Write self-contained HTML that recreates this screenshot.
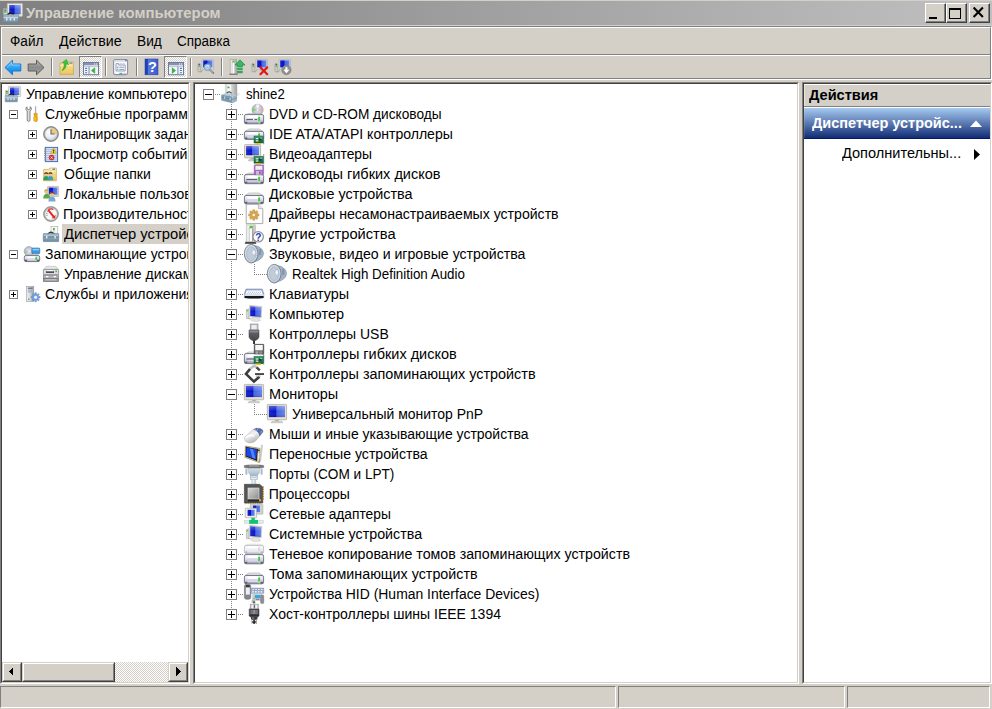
<!DOCTYPE html>
<html><head><meta charset="utf-8"><title>Управление компьютером</title>
<style>
html,body{margin:0;padding:0;}
body{width:992px;height:709px;background:#d4d0c8;position:relative;overflow:hidden;
 font-family:"Liberation Sans",sans-serif;font-size:14px;color:#000;}
div,svg{position:absolute;box-sizing:border-box;}
.t{white-space:nowrap;overflow:visible;transform-origin:0 0;}
.pane{background:#fff;overflow:hidden;}
.ic{overflow:visible;}
</style></head><body>

<svg width="0" height="0" style="position:absolute"><defs>
<linearGradient id="gScr" x1="0" y1="0" x2="1" y2="0"><stop offset="0" stop-color="#1024d0"/><stop offset="0.42" stop-color="#0810c4"/><stop offset="0.5" stop-color="#4464e4"/><stop offset="1" stop-color="#6484f0"/></linearGradient>
<linearGradient id="gScrV" x1="0" y1="0" x2="0" y2="1"><stop offset="0" stop-color="#fff" stop-opacity="0.3"/><stop offset="0.5" stop-color="#fff" stop-opacity="0.0"/><stop offset="1" stop-color="#000" stop-opacity="0.18"/></linearGradient>
<linearGradient id="gDrv" x1="0" y1="0" x2="0" y2="1"><stop offset="0" stop-color="#fbfbfe"/><stop offset="0.5" stop-color="#dcdcec"/><stop offset="0.8" stop-color="#b0b0c0"/><stop offset="1" stop-color="#9898a8"/></linearGradient>
<linearGradient id="gDrvTop" x1="0" y1="0" x2="0" y2="1"><stop offset="0" stop-color="#f4f4f4"/><stop offset="1" stop-color="#c4c4c8"/></linearGradient>
<linearGradient id="gPcb" x1="0" y1="0" x2="0" y2="1"><stop offset="0" stop-color="#3ca070"/><stop offset="1" stop-color="#14603c"/></linearGradient>
<linearGradient id="gBox" x1="0" y1="0" x2="0" y2="1"><stop offset="0" stop-color="#a8c0d0"/><stop offset="1" stop-color="#6c8aa0"/></linearGradient>
<linearGradient id="gTow" x1="0" y1="0" x2="1" y2="0"><stop offset="0" stop-color="#f0f0f0"/><stop offset="0.5" stop-color="#d8d8d8"/><stop offset="1" stop-color="#a0a0a0"/></linearGradient>
<linearGradient id="gBlueArr" x1="0" y1="0" x2="0" y2="1"><stop offset="0" stop-color="#7fd0ff"/><stop offset="0.5" stop-color="#2aa4f4"/><stop offset="1" stop-color="#0a78d8"/></linearGradient>
<linearGradient id="gGrayArr" x1="0" y1="0" x2="0" y2="1"><stop offset="0" stop-color="#b8b8b8"/><stop offset="0.5" stop-color="#8c8c8c"/><stop offset="1" stop-color="#a4a4a4"/></linearGradient>
<linearGradient id="gFold" x1="0" y1="0" x2="0" y2="1"><stop offset="0" stop-color="#fbe7a2"/><stop offset="1" stop-color="#ecc45c"/></linearGradient>
<linearGradient id="gSpk" x1="0" y1="0" x2="1" y2="1"><stop offset="0" stop-color="#d4dce6"/><stop offset="1" stop-color="#8c9cb0"/></linearGradient>
<linearGradient id="gCpu" x1="0" y1="0" x2="1" y2="1"><stop offset="0" stop-color="#d8d8d8"/><stop offset="1" stop-color="#8c8c8c"/></linearGradient>
<linearGradient id="gMouse" x1="0" y1="0" x2="0.6" y2="1"><stop offset="0" stop-color="#c8c8d0"/><stop offset="0.5" stop-color="#f2f2f2"/><stop offset="1" stop-color="#a8a8a8"/></linearGradient>
<linearGradient id="gHelp" x1="0" y1="0" x2="1" y2="0"><stop offset="0" stop-color="#1c3cb0"/><stop offset="0.22" stop-color="#2848c0"/><stop offset="0.24" stop-color="#5878dc"/><stop offset="1" stop-color="#3c5cd0"/></linearGradient>
<linearGradient id="gUsb" x1="0" y1="0" x2="0" y2="1"><stop offset="0" stop-color="#8c8c92"/><stop offset="0.3" stop-color="#5c5c62"/><stop offset="1" stop-color="#48484c"/></linearGradient>
<linearGradient id="gPort" x1="0" y1="0" x2="0" y2="1"><stop offset="0" stop-color="#e0e8f0"/><stop offset="1" stop-color="#a4b8c8"/></linearGradient>
<radialGradient id="gCd" cx="0.5" cy="0.5" r="0.5"><stop offset="0" stop-color="#fff"/><stop offset="0.25" stop-color="#e8e8f0"/><stop offset="0.6" stop-color="#d0c8e0"/><stop offset="1" stop-color="#b8b8c8"/></radialGradient>
<radialGradient id="gClock" cx="0.4" cy="0.35" r="0.7"><stop offset="0" stop-color="#fff"/><stop offset="0.7" stop-color="#e4ecf4"/><stop offset="1" stop-color="#b8c8d8"/></radialGradient>
</defs></svg>
<div style="left:0;top:1px;width:992px;height:24px;background:linear-gradient(to right,#808080,#c0c0c0);"></div>
<svg class="ic" style="left:3px;top:3px" width="20" height="20" viewBox="0 0 16 16"><rect x="3.4" y="0.3" width="12.2" height="10.4" rx="0.6" fill="#ece8dc" stroke="#b8b4a8" stroke-width="0.6"/><rect x="5" y="1.6" width="9.2" height="7.4" fill="url(#gScr)"/><rect x="5" y="1.6" width="9.2" height="7.4" fill="url(#gScrV)"/><rect x="0.4" y="4.6" width="2.8" height="5" fill="#d8d8d8" stroke="#a8a8a8" stroke-width="0.4"/><rect x="0.8" y="6.6" width="2" height="1.2" fill="#30d020"/><rect x="1" y="5.2" width="1.6" height="1" fill="#505050"/><path d="M3.6 9.6 Q6 6.4 8.6 9.6" stroke="#202020" stroke-width="1.1" fill="none"/><rect x="0.2" y="9.4" width="12.2" height="6.4" rx="0.5" fill="url(#gBox)" stroke="#6c8498" stroke-width="0.5"/><rect x="0.4" y="11.2" width="11.8" height="0.9" fill="#c4d4e0"/><rect x="2.4" y="12.2" width="1.2" height="1.8" fill="#e8eef2"/><rect x="5.4" y="12.2" width="1.2" height="1.8" fill="#e8eef2"/><rect x="8.4" y="12.2" width="1.2" height="1.8" fill="#e8eef2"/></svg>
<div class="t" style="left:26.40px;top:3px;height:20px;line-height:20px;transform:scaleX(1.0648);font-weight:bold;color:#d4d0c8;">Управление компьютером</div>
<div style="left:925px;top:3px;width:21px;height:20px;background:#d4d0c8;border-top:1px solid #fff;border-left:1px solid #fff;border-right:1px solid #404040;border-bottom:1px solid #404040;"><div style="left:0;top:0;width:19px;height:18px;border-right:1px solid #808080;border-bottom:1px solid #808080;"></div></div><div style="left:929px;top:17px;width:8px;height:2px;background:#000;"></div>
<div style="left:946px;top:3px;width:21px;height:20px;background:#d4d0c8;border-top:1px solid #fff;border-left:1px solid #fff;border-right:1px solid #404040;border-bottom:1px solid #404040;"><div style="left:0;top:0;width:19px;height:18px;border-right:1px solid #808080;border-bottom:1px solid #808080;"></div></div><div style="left:949px;top:8px;width:12px;height:11px;border:1px solid #000;border-top:2px solid #000;"></div>
<div style="left:969px;top:3px;width:21px;height:20px;background:#d4d0c8;border-top:1px solid #fff;border-left:1px solid #fff;border-right:1px solid #404040;border-bottom:1px solid #404040;"><div style="left:0;top:0;width:19px;height:18px;border-right:1px solid #808080;border-bottom:1px solid #808080;"></div></div><svg style="left:972px;top:6px;" width="13" height="13" viewBox="0 0 13 13"><path d="M1.6 1.6 L10.9 10.9 M10.9 1.6 L1.6 10.9" stroke="#000" stroke-width="2.1" stroke-linecap="butt" fill="none"/></svg>
<div style="left:0;top:26px;width:992px;height:54px;border-top:1px solid #808080;border-left:1px solid #808080;border-right:1px solid #fff;border-bottom:1px solid #fff;"><div style="left:0;top:0;width:990px;height:52px;border-top:1px solid #fff;border-left:1px solid #fff;border-right:1px solid #808080;border-bottom:1px solid #808080;"></div></div>
<div style="left:2px;top:54px;width:988px;height:1px;background:#808080;"></div>
<div style="left:2px;top:55px;width:988px;height:1px;background:#fff;"></div>
<div class="t" style="left:9.51px;top:31px;height:20px;line-height:20px;transform:scaleX(0.9701);">Файл</div>
<div class="t" style="left:59.00px;top:31px;height:20px;line-height:20px;transform:scaleX(1.0164);">Действие</div>
<div class="t" style="left:136.52px;top:31px;height:20px;line-height:20px;transform:scaleX(0.9792);">Вид</div>
<div class="t" style="left:176.52px;top:31px;height:20px;line-height:20px;transform:scaleX(0.9633);">Справка</div>
<svg class="ic" style="left:4px;top:59px" width="18" height="18" viewBox="0 0 18 18"><path d="M1 8.5 L8.5 1.2 L8.5 5 L16.8 5 L16.8 12 L8.5 12 L8.5 15.8 Z" fill="url(#gBlueArr)" stroke="#1c78d0" stroke-width="1" stroke-linejoin="round"/><path d="M3 8.4 L8 3.6 L8 6 L15.6 6" stroke="#b8e4ff" stroke-width="0.8" fill="none" opacity="0.7"/></svg>
<svg class="ic" style="left:27px;top:59px" width="18" height="18" viewBox="0 0 18 18"><path d="M17 8.5 L9.5 1.2 L9.5 5 L1.2 5 L1.2 12 L9.5 12 L9.5 15.8 Z" fill="url(#gGrayArr)" stroke="#5c5c5c" stroke-width="1" stroke-linejoin="round"/></svg>
<div style="left:51px;top:58px;width:1px;height:18px;background:#808080;"></div><div style="left:52px;top:58px;width:1px;height:18px;background:#fff;"></div>
<svg class="ic" style="left:59px;top:59px" width="16" height="16" viewBox="0 0 16 16"><path d="M1 4 L6 4 L7 3 L14.4 3 L14.4 15.4 L1 15.4 Z" fill="url(#gFold)" stroke="#c8a040" stroke-width="0.7"/><rect x="10.4" y="3.6" width="3" height="1.2" rx="0.6" fill="#5090e0"/><path d="M1.2 6.4 L14.2 6.4" stroke="#fcf0c0" stroke-width="0.8"/><path d="M3.2 11.6 Q7.6 9.6 7.2 4.8 L9.6 5.6 L7.4 0.4 L3.4 3.6 L5.4 4.2 Q5.6 8.4 3.2 11.6 Z" fill="#38c838" stroke="#189818" stroke-width="0.5"/></svg>
<div style="left:79px;top:56px;width:23px;height:22px;border-top:1px solid #808080;border-left:1px solid #808080;border-right:1px solid #fff;border-bottom:1px solid #fff;background-color:#d4d0c8;background-image:linear-gradient(45deg,#fff 25%,transparent 25%,transparent 75%,#fff 75%),linear-gradient(45deg,#fff 25%,transparent 25%,transparent 75%,#fff 75%);background-size:2px 2px;background-position:0 0,1px 1px;"></div>
<svg class="ic" style="left:83px;top:62px" width="16" height="16" viewBox="0 0 16 16"><rect x="0.5" y="0.5" width="15" height="12.2" fill="#f4f4f8" stroke="#6c7c9c" stroke-width="1"/><rect x="1" y="1" width="14" height="2" fill="#8494b4"/><rect x="1" y="3.6" width="14" height="1" fill="#a4b0c8"/><rect x="11" y="1.4" width="1.2" height="1.2" fill="#e8ecf4"/><rect x="13" y="1.4" width="1.2" height="1.2" fill="#e8ecf4"/><rect x="5.6" y="4.6" width="0.9" height="7.8" fill="#6c7c9c"/><rect x="2" y="5.8" width="2.2" height="1.1" rx="0.4" fill="#3c78d0"/><rect x="2" y="8.0" width="2.2" height="1.1" rx="0.4" fill="#3c78d0"/><rect x="2" y="10.2" width="2.2" height="1.1" rx="0.4" fill="#3c78d0"/><path d="M11.8 5.8 L11.8 11.4 L8.4 8.6 Z" fill="#38b838" stroke="#189818" stroke-width="0.4"/></svg>
<div style="left:105px;top:58px;width:1px;height:18px;background:#808080;"></div><div style="left:106px;top:58px;width:1px;height:18px;background:#fff;"></div>
<svg class="ic" style="left:113px;top:59px" width="16" height="16" viewBox="0 0 16 16"><rect x="0.6" y="0.6" width="14" height="15" rx="1.6" fill="#fafafc" stroke="#8890a4" stroke-width="1.1"/><rect x="1.6" y="1.4" width="12" height="1.4" fill="#d8dce8"/><rect x="12.2" y="0.8" width="1.4" height="1.4" fill="#4868a8"/><path d="M3 12 L3 4.6 L5.6 4.6 L5.6 6 L12.2 6 L12.2 12 Z" fill="#f4f4f8" stroke="#9098b0" stroke-width="0.9"/><rect x="6.6" y="4.4" width="2.2" height="0.9" fill="#b0b8c8"/><rect x="9.6" y="4.4" width="2.2" height="0.9" fill="#b0b8c8"/><rect x="4.2" y="7.6" width="1.2" height="1.2" fill="#20b0f0"/><rect x="6.4" y="7.8" width="4.6" height="0.9" fill="#9098a8"/><rect x="4.2" y="9.8" width="1.2" height="1.2" fill="#9098a8"/><rect x="6.4" y="10" width="4.6" height="0.9" fill="#9098a8"/><rect x="6.4" y="13.8" width="3" height="1.4" fill="#30b0e8"/><rect x="10.4" y="13.8" width="2.6" height="1.4" fill="#c8c8d0"/></svg>
<div style="left:136px;top:58px;width:1px;height:18px;background:#808080;"></div><div style="left:137px;top:58px;width:1px;height:18px;background:#fff;"></div>
<svg class="ic" style="left:145px;top:59px" width="16" height="16" viewBox="0 0 16 16"><rect x="0" y="0" width="13" height="15.8" fill="url(#gHelp)" stroke="#2038a0" stroke-width="0.5"/><text x="7.4" y="13.4" font-family="Liberation Sans" font-weight="bold" font-size="14.5" text-anchor="middle" fill="#fff">?</text></svg>
<div style="left:164px;top:56px;width:23px;height:22px;border-top:1px solid #808080;border-left:1px solid #808080;border-right:1px solid #fff;border-bottom:1px solid #fff;background-color:#d4d0c8;background-image:linear-gradient(45deg,#fff 25%,transparent 25%,transparent 75%,#fff 75%),linear-gradient(45deg,#fff 25%,transparent 25%,transparent 75%,#fff 75%);background-size:2px 2px;background-position:0 0,1px 1px;"></div>
<svg class="ic" style="left:168px;top:62px" width="16" height="16" viewBox="0 0 16 16"><rect x="0.5" y="0.5" width="15" height="12.2" fill="#f4f4f8" stroke="#6c7c9c" stroke-width="1"/><rect x="1" y="1" width="14" height="2" fill="#8494b4"/><rect x="1" y="3.6" width="14" height="1" fill="#a4b0c8"/><rect x="11" y="1.4" width="1.2" height="1.2" fill="#e8ecf4"/><rect x="13" y="1.4" width="1.2" height="1.2" fill="#e8ecf4"/><rect x="9.5" y="4.6" width="0.9" height="7.8" fill="#6c7c9c"/><rect x="11.8" y="5.8" width="2.2" height="1.1" rx="0.4" fill="#3c78d0"/><rect x="11.8" y="8.0" width="2.2" height="1.1" rx="0.4" fill="#3c78d0"/><rect x="11.8" y="10.2" width="2.2" height="1.1" rx="0.4" fill="#3c78d0"/><path d="M4.2 5.8 L4.2 11.4 L7.6 8.6 Z" fill="#38b838" stroke="#189818" stroke-width="0.4"/></svg>
<div style="left:190px;top:58px;width:1px;height:18px;background:#808080;"></div><div style="left:191px;top:58px;width:1px;height:18px;background:#fff;"></div>
<svg class="ic" style="left:198px;top:59px" width="16" height="16" viewBox="0 0 16 16"><rect x="0" y="4.4" width="2.2" height="8.4" rx="0.8" fill="#d8d8d8" stroke="#8c8c8c" stroke-width="0.6"/><rect x="0.5" y="6.800000000000001" width="1.4" height="1.2" fill="#30d030"/><rect x="0.6" y="5.0" width="1.2" height="1.4" fill="#404040"/><path d="M2 13.0 Q4 13.4 4.4 11.0" stroke="#909090" stroke-width="0.8" fill="none"/><rect x="4" y="0.4" width="11.6" height="10" rx="0.6" fill="#dcdcd8" stroke="#a8a8a4" stroke-width="0.6"/><rect x="5.2" y="1.4" width="9.2" height="7" fill="url(#gScr)"/><rect x="7.4" y="10.4" width="4.4" height="1.4" fill="#c0c0bc"/><path d="M11.4 10.4 L15.4 14" stroke="#787878" stroke-width="1.8" stroke-linecap="round"/><path d="M11.6 10.4 L15.2 13.6" stroke="#e8e8e8" stroke-width="0.7"/><circle cx="9.4" cy="8.2" r="3.3" fill="#9cd0f4" stroke="#8898a8" stroke-width="0.9" fill-opacity="0.85"/><path d="M7.4 7.6 Q9 6 11 7" stroke="#fff" stroke-width="0.9" fill="none"/></svg>
<div style="left:221px;top:58px;width:1px;height:18px;background:#808080;"></div><div style="left:222px;top:58px;width:1px;height:18px;background:#fff;"></div>
<svg class="ic" style="left:229px;top:59px" width="16" height="16" viewBox="0 0 16 16"><path d="M0 15.6 L9 15.6 L8 14.4 L1.2 14.4 Z" fill="#303030"/><rect x="1.2" y="0.6" width="6.4" height="14" fill="url(#gTow)" stroke="#a0a0a0" stroke-width="0.6"/><rect x="3.2" y="3.6" width="2.2" height="10.6" fill="#fafafa" stroke="#c8c8c8" stroke-width="0.4"/><rect x="3.4" y="1.6" width="2" height="1.8" fill="#50d030"/><path d="M11 0.8 L16 6 L13.4 6 L13.4 8 L8.6 8 L8.6 6 L6 6 Z" fill="#38b860" stroke="#188040" stroke-width="0.6"/><rect x="8.6" y="9.2" width="4.8" height="1.8" fill="#38b860" stroke="#188040" stroke-width="0.4"/><rect x="8.6" y="12.2" width="4.8" height="1.8" fill="#38b860" stroke="#188040" stroke-width="0.4"/></svg>
<svg class="ic" style="left:252px;top:59px" width="16" height="16" viewBox="0 0 16 16"><rect x="0" y="4.4" width="2.2" height="8.4" rx="0.8" fill="#d8d8d8" stroke="#8c8c8c" stroke-width="0.6"/><rect x="0.5" y="6.800000000000001" width="1.4" height="1.2" fill="#30d030"/><rect x="0.6" y="5.0" width="1.2" height="1.4" fill="#404040"/><path d="M2 13.0 Q4 13.4 4.4 11.0" stroke="#909090" stroke-width="0.8" fill="none"/><rect x="4" y="0.4" width="11.6" height="10" rx="0.6" fill="#dcdcd8" stroke="#a8a8a4" stroke-width="0.6"/><rect x="5.2" y="1.4" width="9.2" height="7" fill="url(#gScr)"/><rect x="7.4" y="10.4" width="4.4" height="1.4" fill="#c0c0bc"/><path d="M8.4 8.4 L15.2 15.2 M15.2 8.4 L8.4 15.2" stroke="#e01818" stroke-width="2.2" stroke-linecap="round"/></svg>
<svg class="ic" style="left:275px;top:59px" width="16" height="16" viewBox="0 0 16 16"><rect x="0" y="4.4" width="2.2" height="8.4" rx="0.8" fill="#d8d8d8" stroke="#8c8c8c" stroke-width="0.6"/><rect x="0.5" y="6.800000000000001" width="1.4" height="1.2" fill="#30d030"/><rect x="0.6" y="5.0" width="1.2" height="1.4" fill="#404040"/><path d="M2 13.0 Q4 13.4 4.4 11.0" stroke="#909090" stroke-width="0.8" fill="none"/><rect x="4" y="0.4" width="11.6" height="10" rx="0.6" fill="#dcdcd8" stroke="#a8a8a4" stroke-width="0.6"/><rect x="5.2" y="1.4" width="9.2" height="7" fill="url(#gScr)"/><rect x="7.4" y="10.4" width="4.4" height="1.4" fill="#c0c0bc"/><circle cx="11.4" cy="11" r="4.7" fill="#909090" stroke="#787878" stroke-width="0.6"/><path d="M10.4 8.2 L12.4 8.2 L12.4 10.8 L14.4 10.8 L11.4 14.2 L8.4 10.8 L10.4 10.8 Z" fill="#fff"/></svg>
<div style="left:0px;top:82px;width:190px;height:602px;border-top:1px solid #808080;border-left:1px solid #808080;border-right:1px solid #fff;border-bottom:1px solid #fff;"><div style="left:0;top:0;width:188px;height:600px;border-top:1px solid #404040;border-left:1px solid #404040;border-right:1px solid #d4d0c8;border-bottom:1px solid #d4d0c8;"><div class="pane" style="left:0;top:0;width:186px;height:598px;"><svg class="ic" style="left:3px;top:2px" width="16" height="16" viewBox="0 0 16 16"><rect x="3.4" y="0.3" width="12.2" height="10.4" rx="0.6" fill="#ece8dc" stroke="#b8b4a8" stroke-width="0.6"/><rect x="5" y="1.6" width="9.2" height="7.4" fill="url(#gScr)"/><rect x="5" y="1.6" width="9.2" height="7.4" fill="url(#gScrV)"/><rect x="0.4" y="4.6" width="2.8" height="5" fill="#d8d8d8" stroke="#a8a8a8" stroke-width="0.4"/><rect x="0.8" y="6.6" width="2" height="1.2" fill="#30d020"/><rect x="1" y="5.2" width="1.6" height="1" fill="#505050"/><path d="M3.6 9.6 Q6 6.4 8.6 9.6" stroke="#202020" stroke-width="1.1" fill="none"/><rect x="0.2" y="9.4" width="12.2" height="6.4" rx="0.5" fill="url(#gBox)" stroke="#6c8498" stroke-width="0.5"/><rect x="0.4" y="11.2" width="11.8" height="0.9" fill="#c4d4e0"/><rect x="2.4" y="12.2" width="1.2" height="1.8" fill="#e8eef2"/><rect x="5.4" y="12.2" width="1.2" height="1.8" fill="#e8eef2"/><rect x="8.4" y="12.2" width="1.2" height="1.8" fill="#e8eef2"/></svg><div class="t" style="left:24.20px;top:0px;height:20px;line-height:20px;transform:scaleX(1.0038);">Управление компьютеро</div><div style="left:7px;top:26px;width:9px;height:9px;border:1px solid #808080;background:#fff;"></div><div style="left:9px;top:30px;width:5px;height:1px;background:#000;"></div><svg class="ic" style="left:22px;top:22px" width="16" height="16" viewBox="0 0 16 16"><path d="M3 0.8 Q1.6 1.6 2 3.6 L3.2 5 L3.2 14 Q3.2 15.4 4.6 15.4 Q6 15.4 6 14 L6 5 L7.4 3.4 Q7.8 1.4 6.2 0.6 L6.2 2.8 L4.6 3.6 L3 2.8 Z" fill="#dcdcdc" stroke="#7c7c7c" stroke-width="0.9"/><rect x="10.9" y="0.2" width="1.3" height="7.6" fill="#a8b0c0"/><path d="M10 7.4 L13.2 7.4 L13.2 9.6 L12.6 10 L13.4 11 L13.4 14.6 Q13.4 15.6 11.6 15.6 Q9.8 15.6 9.8 14.6 L9.8 11 L10.6 10 L10 9.6 Z" fill="#f0a808" stroke="#c88400" stroke-width="0.5"/><rect x="10.6" y="11" width="1" height="3.6" fill="#fcd050"/></svg><div class="t" style="left:43.00px;top:20px;height:20px;line-height:20px;transform:scaleX(0.9986);">Служебные программы</div><div style="left:26px;top:46px;width:9px;height:9px;border:1px solid #808080;background:#fff;"></div><div style="left:28px;top:50px;width:5px;height:1px;background:#000;"></div><div style="left:30px;top:48px;width:1px;height:5px;background:#000;"></div><svg class="ic" style="left:41px;top:42px" width="16" height="16" viewBox="0 0 16 16"><circle cx="8" cy="8" r="7.5" fill="#989898" stroke="#787878" stroke-width="0.7"/><circle cx="8" cy="8" r="6" fill="url(#gClock)" stroke="#d8d8d8" stroke-width="0.6"/><path d="M8 8 L8 2 A6 6 0 0 1 14 8 Z" fill="#f0c878"/><path d="M8 3.2 L8 8 L11.6 8" stroke="#606870" stroke-width="1.1" fill="none"/></svg><div class="t" style="left:61.43px;top:40px;height:20px;line-height:20px;transform:scaleX(0.9724);">Планировщик заданий</div><div style="left:26px;top:66px;width:9px;height:9px;border:1px solid #808080;background:#fff;"></div><div style="left:28px;top:70px;width:5px;height:1px;background:#000;"></div><div style="left:30px;top:68px;width:1px;height:5px;background:#000;"></div><svg class="ic" style="left:41px;top:62px" width="16" height="16" viewBox="0 0 16 16"><rect x="2.4" y="1.4" width="12.2" height="14.2" fill="#d4e0f4" stroke="#4c6cb0" stroke-width="1"/><rect x="3.4" y="3.0" width="10.4" height="0.7" fill="#9cb4dc"/><rect x="3.4" y="5.1" width="10.4" height="0.7" fill="#9cb4dc"/><rect x="3.4" y="7.2" width="10.4" height="0.7" fill="#9cb4dc"/><rect x="3.4" y="9.3" width="10.4" height="0.7" fill="#9cb4dc"/><rect x="3.4" y="11.4" width="10.4" height="0.7" fill="#9cb4dc"/><rect x="3.4" y="13.5" width="10.4" height="0.7" fill="#9cb4dc"/><rect x="1" y="2.4" width="2.4" height="1.1" rx="0.5" fill="#8c8c94"/><rect x="1" y="4.6" width="2.4" height="1.1" rx="0.5" fill="#8c8c94"/><rect x="1" y="6.8" width="2.4" height="1.1" rx="0.5" fill="#8c8c94"/><rect x="1" y="9.0" width="2.4" height="1.1" rx="0.5" fill="#8c8c94"/><rect x="1" y="11.2" width="2.4" height="1.1" rx="0.5" fill="#8c8c94"/><rect x="1" y="13.4" width="2.4" height="1.1" rx="0.5" fill="#8c8c94"/><path d="M10.6 2 L13.6 7.2 L7.6 7.2 Z" fill="#f8d428" stroke="#c09800" stroke-width="0.5"/><rect x="10.1" y="3.8" width="1" height="1.8" fill="#302000"/><rect x="10.1" y="6" width="1" height="0.7" fill="#302000"/><circle cx="8.6" cy="11.6" r="2.5" fill="#e03030" stroke="#a81818" stroke-width="0.5"/><path d="M7.6 10.6 L9.6 12.6 M9.6 10.6 L7.6 12.6" stroke="#fff" stroke-width="0.8"/></svg><div class="t" style="left:61.19px;top:60px;height:20px;line-height:20px;transform:scaleX(1.0132);">Просмотр событий</div><div style="left:26px;top:86px;width:9px;height:9px;border:1px solid #808080;background:#fff;"></div><div style="left:28px;top:90px;width:5px;height:1px;background:#000;"></div><div style="left:30px;top:88px;width:1px;height:5px;background:#000;"></div><svg class="ic" style="left:41px;top:82px" width="16" height="16" viewBox="0 0 16 16"><path d="M0.6 3.4 L5.6 3.4 L6.8 2 L13.4 2 L13.4 14.8 L0.6 14.8 Z" fill="url(#gFold)" stroke="#c8a040" stroke-width="0.6"/><rect x="9" y="2.6" width="3" height="1.4" rx="0.6" fill="#4890e0"/><rect x="8" y="2.6" width="1.4" height="1.4" fill="#fff"/><path d="M0.8 5.4 L13.2 5.4" stroke="#fcf0c0" stroke-width="0.8"/><path d="M0.3100000000000005 14.149999999999999 Q0.3100000000000005 10.239999999999998 3.2 10.07 Q6.09 10.239999999999998 6.09 14.149999999999999 Z" fill="#28a058"/><circle cx="3.2" cy="8.2" r="1.9549999999999998" fill="#e8c098"/><path d="M1.1600000000000001 8.2 A2.04 2.04 0 0 1 5.24 8.2 Q3.2 6.839999999999999 1.1600000000000001 8.2 Z" fill="#302418"/><path d="M4.510000000000001 14.149999999999999 Q4.510000000000001 10.239999999999998 7.4 10.07 Q10.29 10.239999999999998 10.29 14.149999999999999 Z" fill="#38a0b8"/><circle cx="7.4" cy="8.2" r="1.9549999999999998" fill="#e8c098"/><path d="M5.36 8.2 A2.04 2.04 0 0 1 9.440000000000001 8.2 Q7.4 6.839999999999999 5.36 8.2 Z" fill="#302418"/></svg><div class="t" style="left:61.70px;top:80px;height:20px;line-height:20px;transform:scaleX(0.9988);">Общие папки</div><div style="left:26px;top:106px;width:9px;height:9px;border:1px solid #808080;background:#fff;"></div><div style="left:28px;top:110px;width:5px;height:1px;background:#000;"></div><div style="left:30px;top:108px;width:1px;height:5px;background:#000;"></div><svg class="ic" style="left:41px;top:102px" width="16" height="16" viewBox="0 0 16 16"><rect x="4.4" y="0.4" width="11.2" height="10" rx="0.6" fill="#d8d8d0" stroke="#a8a8a0" stroke-width="0.6"/><rect x="5.8" y="1.6" width="8.6" height="7" fill="url(#gScr)"/><path d="M0.20000000000000018 12.6 Q0.20000000000000018 8.0 3.6 7.8 Q7.0 8.0 7.0 12.6 Z" fill="#58a848"/><circle cx="3.6" cy="5.6" r="2.3" fill="#e8c098"/><path d="M1.2000000000000002 5.6 A2.4 2.4 0 0 1 6.0 5.6 Q3.6 3.9999999999999996 1.2000000000000002 5.6 Z" fill="#c8a850"/><path d="M5.43 15.55 Q5.43 10.719999999999999 9 10.51 Q12.57 10.719999999999999 12.57 15.55 Z" fill="#78a8d8"/><circle cx="9" cy="8.2" r="2.415" fill="#e8c098"/><path d="M6.48 8.2 A2.52 2.52 0 0 1 11.52 8.2 Q9 6.52 6.48 8.2 Z" fill="#604028"/></svg><div class="t" style="left:62.40px;top:100px;height:20px;line-height:20px;transform:scaleX(0.9967);">Локальные пользователи и группы</div><div style="left:26px;top:126px;width:9px;height:9px;border:1px solid #808080;background:#fff;"></div><div style="left:28px;top:130px;width:5px;height:1px;background:#000;"></div><div style="left:30px;top:128px;width:1px;height:5px;background:#000;"></div><svg class="ic" style="left:41px;top:122px" width="16" height="16" viewBox="0 0 16 16"><circle cx="8" cy="8" r="7.5" fill="#a8a8a8" stroke="#787878" stroke-width="0.6"/><circle cx="8" cy="8" r="6" fill="#f8f8f8" stroke="#d0d0d0" stroke-width="0.5"/><path d="M3.4 9.6 L4.6 9.2 M3.2 7.4 L4.4 7.4 M3.8 5.2 L4.8 5.8" stroke="#50a050" stroke-width="0.9"/><path d="M5.6 3 L11.4 10 L12.6 8.6 L12.2 12.4 L8.4 12.2 L9.8 11.2 L4.4 4.4 Z" fill="#e02828"/><path d="M5.6 3.4 Q8 2.4 10.4 3.4" stroke="#e02828" stroke-width="1.2" fill="none"/></svg><div class="t" style="left:61.39px;top:120px;height:20px;line-height:20px;transform:scaleX(1.0149);">Производительность</div><svg class="ic" style="left:41px;top:142px" width="16" height="16" viewBox="0 0 16 16"><rect x="8" y="0.3" width="6.8" height="8.6" fill="#f8f8f8" stroke="#a8a8a8" stroke-width="0.6"/><rect x="10" y="2" width="1.8" height="2.2" fill="#40c030"/><rect x="10" y="4.8" width="2" height="3" fill="#e8e8e8" stroke="#c8c8c8" stroke-width="0.3"/><path d="M5 8 Q8 4.4 11 8" stroke="#303030" stroke-width="1.2" fill="none"/><rect x="0.3" y="7.6" width="15.4" height="8" rx="0.6" fill="url(#gBox)" stroke="#58748c" stroke-width="0.6"/><rect x="0.6" y="9.6" width="14.8" height="0.9" fill="#c8d8e4"/><rect x="0.6" y="10.5" width="14.8" height="0.8" fill="#506880"/><rect x="3" y="10" width="1.4" height="2.4" fill="#e8eef2"/><rect x="11.4" y="10" width="1.4" height="2.4" fill="#e8eef2"/></svg><div style="left:60.0px;top:140px;width:200px;height:20px;background:#d4d0c8;"></div><div class="t" style="left:61.60px;top:140px;height:20px;line-height:20px;transform:scaleX(1.0548);">Диспетчер устройств</div><div style="left:7px;top:166px;width:9px;height:9px;border:1px solid #808080;background:#fff;"></div><div style="left:9px;top:170px;width:5px;height:1px;background:#000;"></div><svg class="ic" style="left:22px;top:162px" width="16" height="16" viewBox="0 0 16 16"><circle cx="5" cy="5.4" r="4.8" fill="url(#gCd)" stroke="#9898a8" stroke-width="0.6"/><circle cx="5" cy="5.4" r="1.3" fill="#fff" stroke="#a8a8b8" stroke-width="0.4"/><path d="M5 5.4 L0.6 4 A4.8 4.8 0 0 0 1 8 Z" fill="#70d850" opacity="0.5"/><rect x="7.8" y="2" width="8" height="5.8" rx="1" fill="#3c98d8" stroke="#2070b0" stroke-width="0.6"/><rect x="8.6" y="2.8" width="6.4" height="1.6" fill="#90ccf0"/><g><path d="M3 8.4 L13 8.4 L15.1 9.6 L0.8999999999999999 9.6 Z" fill="url(#gDrvTop)" stroke="#a4a4ac" stroke-width="0.6"/><rect x="0.3" y="9.6" width="15.399999999999999" height="6.000000000000001" rx="1.6" fill="url(#gDrv)" stroke="#6c6c7c" stroke-width="0.9"/><rect x="3.5" y="10.5" width="8.47" height="1.86" fill="#fff"/><rect x="3.5" y="12.36" width="8.47" height="2.23" fill="#d6d6ec"/><rect x="11.62" y="10.0" width="1.2" height="5.200000000000001" fill="#b8e8a8" opacity="0.8"/><rect x="11.46" y="11.21" width="1.6" height="2.48" fill="#28c828"/><rect x="1.1" y="13.8" width="2" height="1.4" fill="#585864"/><rect x="12.899999999999999" y="13.8" width="2" height="1.4" fill="#585864"/></g></svg><div class="t" style="left:43.00px;top:160px;height:20px;line-height:20px;transform:scaleX(0.9965);">Запоминающие устройства</div><svg class="ic" style="left:41px;top:182px" width="16" height="16" viewBox="0 0 16 16"><path d="M3 0.4 L13 0.4 L15.4 3.4 L0.6 3.4 Z" fill="#e8e8e8" stroke="#a8a8a8" stroke-width="0.5"/><rect x="0.4" y="3.4" width="15.2" height="5.4" rx="1" fill="#dcdce0" stroke="#78787c" stroke-width="0.7"/><rect x="3" y="5.4" width="8" height="1.4" fill="#282830"/><rect x="12.4" y="4.6" width="1.6" height="1.6" fill="#30c030"/><rect x="4" y="4.2" width="6" height="0.9" fill="#fff"/><rect x="0.4" y="9" width="15.2" height="3.4" fill="#b0b0b4" stroke="#78787c" stroke-width="0.6"/><rect x="3" y="10" width="2.4" height="1.2" fill="#fff"/><rect x="10.6" y="10" width="2.4" height="1.2" fill="#fff"/><rect x="0.4" y="12.6" width="15.2" height="3" fill="#98989c" stroke="#68686c" stroke-width="0.6"/><rect x="2.4" y="13.4" width="11" height="0.9" fill="#d8d8d8"/></svg><div class="t" style="left:61.90px;top:180px;height:20px;line-height:20px;transform:scaleX(0.9975);">Управление дисками</div><div style="left:7px;top:206px;width:9px;height:9px;border:1px solid #808080;background:#fff;"></div><div style="left:9px;top:210px;width:5px;height:1px;background:#000;"></div><div style="left:11px;top:208px;width:1px;height:5px;background:#000;"></div><svg class="ic" style="left:22px;top:202px" width="16" height="16" viewBox="0 0 16 16"><rect x="2.6" y="0.4" width="7.2" height="15" fill="url(#gTow)" stroke="#8c9cac" stroke-width="0.6"/><rect x="3.8" y="1.6" width="4.8" height="1.2" fill="#586878"/><rect x="3.8" y="3.6" width="4.8" height="1" fill="#98a8b8"/><rect x="3.8" y="5.4" width="4.8" height="1" fill="#98a8b8"/><rect x="4" y="12.6" width="1.4" height="1.4" fill="#40c040"/><path d="M16.13 10.39 L16.13 12.01 L14.71 11.95 L14.33 12.87 L15.37 13.83 L14.23 14.97 L13.27 13.93 L12.35 14.31 L12.41 15.73 L10.79 15.73 L10.85 14.31 L9.93 13.93 L8.97 14.97 L7.83 13.83 L8.87 12.87 L8.49 11.95 L7.07 12.01 L7.07 10.39 L8.49 10.45 L8.87 9.53 L7.83 8.57 L8.97 7.43 L9.93 8.47 L10.85 8.09 L10.79 6.67 L12.41 6.67 L12.35 8.09 L13.27 8.47 L14.23 7.43 L15.37 8.57 L14.33 9.53 L14.71 10.45 Z" fill="#78a0dc" stroke="#4878c0" stroke-width="0.4"/><circle cx="11.6" cy="11.2" r="1.5" fill="#f0f4fc"/></svg><div class="t" style="left:43.00px;top:200px;height:20px;line-height:20px;transform:scaleX(1.0057);">Службы и приложения</div><div style="left:0;top:578px;width:186px;height:20px;background-color:#d4d0c8;background-image:linear-gradient(45deg,#fff 25%,transparent 25%,transparent 75%,#fff 75%),linear-gradient(45deg,#fff 25%,transparent 25%,transparent 75%,#fff 75%);background-size:2px 2px;background-position:0 0,1px 1px;"></div><div style="left:0px;top:578px;width:20px;height:20px;background:#d4d0c8;border-top:1px solid #d4d0c8;border-left:1px solid #d4d0c8;border-right:1px solid #404040;border-bottom:1px solid #404040;"><div style="left:0;top:0;width:18px;height:18px;border-top:1px solid #fff;border-left:1px solid #fff;border-right:1px solid #808080;border-bottom:1px solid #808080;"></div></div><svg style="left:6px;top:583px" width="5" height="9" viewBox="0 0 5 9" shape-rendering="crispEdges"><path d="M5 0 L5 9 L0.5 4.5 Z" fill="#000"/></svg><div style="left:20px;top:578px;width:93px;height:20px;background:#d4d0c8;border-top:1px solid #d4d0c8;border-left:1px solid #d4d0c8;border-right:1px solid #404040;border-bottom:1px solid #404040;"><div style="left:0;top:0;width:91px;height:18px;border-top:1px solid #fff;border-left:1px solid #fff;border-right:1px solid #808080;border-bottom:1px solid #808080;"></div></div><div style="left:166px;top:578px;width:20px;height:20px;background:#d4d0c8;border-top:1px solid #d4d0c8;border-left:1px solid #d4d0c8;border-right:1px solid #404040;border-bottom:1px solid #404040;"><div style="left:0;top:0;width:18px;height:18px;border-top:1px solid #fff;border-left:1px solid #fff;border-right:1px solid #808080;border-bottom:1px solid #808080;"></div></div><svg style="left:174px;top:583px" width="5" height="9" viewBox="0 0 5 9" shape-rendering="crispEdges"><path d="M0 0 L0 9 L4.5 4.5 Z" fill="#000"/></svg></div></div></div>
<div style="left:193px;top:82px;width:606px;height:602px;border-top:1px solid #808080;border-left:1px solid #808080;border-right:1px solid #fff;border-bottom:1px solid #fff;"><div style="left:0;top:0;width:604px;height:600px;border-top:1px solid #404040;border-left:1px solid #404040;border-right:1px solid #d4d0c8;border-bottom:1px solid #d4d0c8;"><div class="pane" style="left:0;top:0;width:602px;height:598px;"><div style="left:36px;top:20px;width:1px;height:5px;background:repeating-linear-gradient(to bottom,#808080 0,#808080 1px,transparent 1px,transparent 2px);"></div><div style="left:36px;top:37px;width:1px;height:494px;background:repeating-linear-gradient(to bottom,#808080 0,#808080 1px,transparent 1px,transparent 2px);"></div><div style="left:8px;top:5px;width:11px;height:11px;border:1px solid #808080;background:#fff;"></div><div style="left:10px;top:10px;width:7px;height:1px;background:#000;"></div><div style="left:20px;top:10px;width:1px;height:1px;background:#808080;"></div><div style="left:22px;top:10px;width:1px;height:1px;background:#808080;"></div><div style="left:24px;top:10px;width:1px;height:1px;background:#808080;"></div><svg class="ic" style="left:26px;top:0px" width="20" height="20" viewBox="0 0 20 20"><path d="M14 10 L19.6 8.8 L17 12.6 Z" fill="#d8d8d8" opacity="0.6"/><path d="M4.4 0 L16 0 L16 11.6 L4.4 11.6 Z" fill="url(#gTow)" stroke="#b4b4b4" stroke-width="0.5"/><rect x="4.8" y="0" width="1.4" height="11" fill="#d8d8d8"/><rect x="6" y="0.6" width="4.2" height="10.4" fill="#f6f6f6"/><rect x="6.4" y="2.6" width="2" height="1.6" fill="#38b828"/><rect x="6.2" y="5" width="2.6" height="2.6" fill="#fff" stroke="#d0d0d0" stroke-width="0.3"/><path d="M5.6 9.4 Q8 6.2 10.6 9.4" stroke="#484848" stroke-width="1.2" fill="none"/><path d="M0.3 10.4 L11.6 12.6 L11.6 19.2 L0.3 16.6 Z" fill="#7c9ab0"/><path d="M11.6 12.6 L16 10.8 L16 17 L11.6 19.2 Z" fill="#9cb4c4"/><path d="M0.3 10.4 L5.4 9 L16 10.8 L11.6 12.6 Z" fill="#b4c8d4"/><path d="M0.3 13.2 L11.6 15.6 L16 13.6" stroke="#5c7c94" stroke-width="0.6" fill="none"/><rect x="3" y="12.6" width="1.2" height="2.2" fill="#c8d4dc"/><rect x="8.6" y="13.8" width="1.2" height="2.2" fill="#c8d4dc"/></svg><div class="t" style="left:50.83px;top:0px;height:20px;line-height:20px;transform:scaleX(0.9383);">shine2</div><div style="left:31px;top:25px;width:11px;height:11px;border:1px solid #808080;background:#fff;"></div><div style="left:33px;top:30px;width:7px;height:1px;background:#000;"></div><div style="left:36px;top:27px;width:1px;height:7px;background:#000;"></div><div style="left:43px;top:30px;width:1px;height:1px;background:#808080;"></div><div style="left:45px;top:30px;width:1px;height:1px;background:#808080;"></div><div style="left:47px;top:30px;width:1px;height:1px;background:#808080;"></div><svg class="ic" style="left:49px;top:20px" width="20" height="20" viewBox="0 0 20 20"><circle cx="13.6" cy="5.8" r="5.6" fill="url(#gCd)" stroke="#9c9cac" stroke-width="0.6"/><path d="M13.6 5.8 L8.6 3.6 A5.6 5.6 0 0 0 8.6 8 Z" fill="#58d838" opacity="0.55"/><path d="M13.6 5.8 L18.6 3.4 A5.6 5.6 0 0 1 18.8 8 Z" fill="#e8a8a0" opacity="0.55"/><path d="M13.6 5.8 L11.6 0.7 A5.6 5.6 0 0 1 15.8 0.7 Z" fill="#fff" opacity="0.8"/><circle cx="13.6" cy="5.8" r="1.5" fill="#f4f4f8" stroke="#a8a8b8" stroke-width="0.5"/><g><path d="M5 9.4 L15 9.4 L19.0 10.6 L1.0 10.6 Z" fill="url(#gDrvTop)" stroke="#a4a4ac" stroke-width="0.6"/><rect x="0.4" y="10.6" width="19.200000000000003" height="9.200000000000001" rx="1.6" fill="url(#gDrv)" stroke="#6c6c7c" stroke-width="0.9"/><rect x="3.6" y="11.5" width="10.560000000000002" height="2.82" fill="#fff"/><rect x="3.6" y="14.32" width="10.560000000000002" height="3.38" fill="#d6d6ec"/><rect x="2.4" y="15.11" width="10.752000000000002" height="1" fill="#505058"/><rect x="14.51" y="11.0" width="1.2" height="8.4" fill="#b8e8a8" opacity="0.8"/><rect x="14.32" y="13.04" width="1.6" height="3.76" fill="#28c828"/><rect x="1.2000000000000002" y="18" width="2" height="1.4" fill="#585864"/><rect x="16.8" y="18" width="2" height="1.4" fill="#585864"/></g><rect x="9" y="15" width="1.4" height="1.2" fill="#fff"/></svg><div class="t" style="left:73.72px;top:20px;height:20px;line-height:20px;transform:scaleX(0.9766);">DVD и CD-ROM дисководы</div><div style="left:31px;top:45px;width:11px;height:11px;border:1px solid #808080;background:#fff;"></div><div style="left:33px;top:50px;width:7px;height:1px;background:#000;"></div><div style="left:36px;top:47px;width:1px;height:7px;background:#000;"></div><div style="left:43px;top:50px;width:1px;height:1px;background:#808080;"></div><div style="left:45px;top:50px;width:1px;height:1px;background:#808080;"></div><div style="left:47px;top:50px;width:1px;height:1px;background:#808080;"></div><svg class="ic" style="left:49px;top:40px" width="20" height="20" viewBox="0 0 20 20"><g><path d="M5 5 L15 5 L19.0 7.4 L1.0 7.4 Z" fill="url(#gDrvTop)" stroke="#a4a4ac" stroke-width="0.6"/><rect x="0.4" y="7.4" width="19.200000000000003" height="7.999999999999999" rx="1.6" fill="url(#gDrv)" stroke="#6c6c7c" stroke-width="0.9"/><rect x="3.6" y="8.3" width="10.560000000000002" height="2.46" fill="#fff"/><rect x="3.6" y="10.76" width="10.560000000000002" height="2.95" fill="#d6d6ec"/><rect x="14.51" y="7.800000000000001" width="1.2" height="7.199999999999999" fill="#b8e8a8" opacity="0.8"/><rect x="14.32" y="9.53" width="1.6" height="3.28" fill="#28c828"/><rect x="1.2000000000000002" y="13.6" width="2" height="1.4" fill="#585864"/><rect x="16.8" y="13.6" width="2" height="1.4" fill="#585864"/></g><rect x="19.3" y="9.8" width="0.9" height="10.5" fill="#8c98a8"/><rect x="10" y="12" width="9.3" height="7" fill="url(#gPcb)" stroke="#186040" stroke-width="0.5"/><rect x="11.8" y="14" width="2.6" height="1.2" fill="#e8f4ec"/><rect x="11.8" y="16.2" width="2.6" height="1.2" fill="#e8f4ec"/><rect x="14.8" y="14.4" width="2.6" height="2" fill="#183828"/><rect x="16.4" y="13.6" width="1.4" height="1" fill="#c8e0d0"/><rect x="11.3" y="19" width="5.4" height="1.6" fill="#f4c000"/></svg><div class="t" style="left:73.70px;top:40px;height:20px;line-height:20px;transform:scaleX(1.0033);">IDE ATA/ATAPI контроллеры</div><div style="left:31px;top:65px;width:11px;height:11px;border:1px solid #808080;background:#fff;"></div><div style="left:33px;top:70px;width:7px;height:1px;background:#000;"></div><div style="left:36px;top:67px;width:1px;height:7px;background:#000;"></div><div style="left:43px;top:70px;width:1px;height:1px;background:#808080;"></div><div style="left:45px;top:70px;width:1px;height:1px;background:#808080;"></div><div style="left:47px;top:70px;width:1px;height:1px;background:#808080;"></div><svg class="ic" style="left:49px;top:60px" width="20" height="20" viewBox="0 0 20 20"><rect x="0.5" y="0.6" width="16.1" height="13.3" rx="0.8" fill="#e4e0d4" stroke="#a8a498" stroke-width="0.7"/><rect x="2.1" y="2.1" width="12.900000000000002" height="9.100000000000001" fill="url(#gScr)"/><rect x="2.1" y="2.1" width="12.900000000000002" height="9.100000000000001" fill="url(#gScrV)"/><rect x="6.750000000000001" y="13.9" width="3.6" height="1.6" fill="#b0b0ac"/><path d="M5.250000000000001 15.3 L11.850000000000001 15.3 L13.05 16.9 L4.050000000000001 16.9 Z" fill="#d0d0cc" stroke="#a4a4a0" stroke-width="0.4"/><rect x="19.3" y="10.0" width="0.9" height="10.5" fill="#8c98a8"/><rect x="10" y="12.2" width="9.3" height="7" fill="url(#gPcb)" stroke="#186040" stroke-width="0.5"/><rect x="11.8" y="14.2" width="2.6" height="1.2" fill="#e8f4ec"/><rect x="11.8" y="16.4" width="2.6" height="1.2" fill="#e8f4ec"/><rect x="14.8" y="14.6" width="2.6" height="2" fill="#183828"/><rect x="16.4" y="13.799999999999999" width="1.4" height="1" fill="#c8e0d0"/><rect x="11.3" y="19.2" width="5.4" height="1.6" fill="#f4c000"/></svg><div class="t" style="left:73.71px;top:60px;height:20px;line-height:20px;transform:scaleX(0.9892);">Видеоадаптеры</div><div style="left:31px;top:85px;width:11px;height:11px;border:1px solid #808080;background:#fff;"></div><div style="left:33px;top:90px;width:7px;height:1px;background:#000;"></div><div style="left:36px;top:87px;width:1px;height:7px;background:#000;"></div><div style="left:43px;top:90px;width:1px;height:1px;background:#808080;"></div><div style="left:45px;top:90px;width:1px;height:1px;background:#808080;"></div><div style="left:47px;top:90px;width:1px;height:1px;background:#808080;"></div><svg class="ic" style="left:49px;top:80px" width="20" height="20" viewBox="0 0 20 20"><g><path d="M5 9 L15 9 L19.0 10.7 L1.0 10.7 Z" fill="url(#gDrvTop)" stroke="#a4a4ac" stroke-width="0.6"/><rect x="0.4" y="10.7" width="19.200000000000003" height="9.0" rx="1.6" fill="url(#gDrv)" stroke="#6c6c7c" stroke-width="0.9"/><rect x="3.6" y="11.6" width="10.560000000000002" height="2.76" fill="#fff"/><rect x="3.6" y="14.36" width="10.560000000000002" height="3.31" fill="#d6d6ec"/><rect x="2.4" y="15.12" width="10.752000000000002" height="1" fill="#505058"/><rect x="14.51" y="11.1" width="1.2" height="8.2" fill="#b8e8a8" opacity="0.8"/><rect x="14.32" y="13.09" width="1.6" height="3.68" fill="#28c828"/><rect x="1.2000000000000002" y="17.9" width="2" height="1.4" fill="#585864"/><rect x="16.8" y="17.9" width="2" height="1.4" fill="#585864"/></g><rect x="10.2" y="1" width="9.4" height="9.7" rx="0.6" fill="#a868c4" stroke="#8848a8" stroke-width="0.5"/><rect x="11.4" y="1.8" width="7" height="4" fill="#f0ecf8"/><rect x="12" y="7" width="5.4" height="3.7" fill="#c8bcd0"/><rect x="15.2" y="7.4" width="1.4" height="2.8" fill="#7c5890"/></svg><div class="t" style="left:73.75px;top:80px;height:20px;line-height:20px;transform:scaleX(1.0361);">Дисководы гибких дисков</div><div style="left:31px;top:105px;width:11px;height:11px;border:1px solid #808080;background:#fff;"></div><div style="left:33px;top:110px;width:7px;height:1px;background:#000;"></div><div style="left:36px;top:107px;width:1px;height:7px;background:#000;"></div><div style="left:43px;top:110px;width:1px;height:1px;background:#808080;"></div><div style="left:45px;top:110px;width:1px;height:1px;background:#808080;"></div><div style="left:47px;top:110px;width:1px;height:1px;background:#808080;"></div><svg class="ic" style="left:49px;top:100px" width="20" height="20" viewBox="0 0 20 20"><g><path d="M5 9 L15 9 L19.0 11.5 L1.0 11.5 Z" fill="url(#gDrvTop)" stroke="#a4a4ac" stroke-width="0.6"/><rect x="0.4" y="11.5" width="19.200000000000003" height="8.3" rx="1.6" fill="url(#gDrv)" stroke="#6c6c7c" stroke-width="0.9"/><rect x="3.6" y="12.4" width="10.560000000000002" height="2.55" fill="#fff"/><rect x="3.6" y="14.95" width="10.560000000000002" height="3.06" fill="#d6d6ec"/><rect x="14.51" y="11.9" width="1.2" height="7.5" fill="#b8e8a8" opacity="0.8"/><rect x="14.32" y="13.71" width="1.6" height="3.40" fill="#28c828"/><rect x="1.2000000000000002" y="18" width="2" height="1.4" fill="#585864"/><rect x="16.8" y="18" width="2" height="1.4" fill="#585864"/></g></svg><div class="t" style="left:73.75px;top:100px;height:20px;line-height:20px;transform:scaleX(1.0275);">Дисковые устройства</div><div style="left:31px;top:125px;width:11px;height:11px;border:1px solid #808080;background:#fff;"></div><div style="left:33px;top:130px;width:7px;height:1px;background:#000;"></div><div style="left:36px;top:127px;width:1px;height:7px;background:#000;"></div><div style="left:43px;top:130px;width:1px;height:1px;background:#808080;"></div><div style="left:45px;top:130px;width:1px;height:1px;background:#808080;"></div><div style="left:47px;top:130px;width:1px;height:1px;background:#808080;"></div><svg class="ic" style="left:49px;top:120px" width="20" height="20" viewBox="0 0 20 20"><path d="M2.2 0.3 L14.4 0.3 L18.8 4.6 L18.8 19.6 L2.2 19.6 Z" fill="#fcfcfc" stroke="#a0a0a0" stroke-width="0.9"/><path d="M14.4 0.3 L14.4 4.6 L18.8 4.6" fill="#e8e8e8" stroke="#a8a8a8" stroke-width="0.7"/><path d="M15.00 10.00 L15.00 12.00 L13.67 12.03 L13.27 12.99 L14.19 13.97 L12.77 15.39 L11.81 14.46 L10.85 14.86 L10.80 16.20 L8.80 16.20 L8.77 14.87 L7.81 14.47 L6.83 15.39 L5.41 13.97 L6.34 13.01 L5.94 12.05 L4.60 12.00 L4.60 10.00 L5.93 9.97 L6.33 9.01 L5.41 8.03 L6.83 6.61 L7.79 7.54 L8.75 7.14 L8.80 5.80 L10.80 5.80 L10.83 7.13 L11.79 7.53 L12.77 6.61 L14.19 8.03 L13.26 8.99 L13.66 9.95 Z" fill="#d4a450" stroke="#c09038" stroke-width="0.4"/><circle cx="9.8" cy="11" r="1.3" fill="#fcf8f0"/></svg><div class="t" style="left:73.75px;top:120px;height:20px;line-height:20px;transform:scaleX(1.0068);">Драйверы несамонастраиваемых устройств</div><div style="left:31px;top:145px;width:11px;height:11px;border:1px solid #808080;background:#fff;"></div><div style="left:33px;top:150px;width:7px;height:1px;background:#000;"></div><div style="left:36px;top:147px;width:1px;height:7px;background:#000;"></div><div style="left:43px;top:150px;width:1px;height:1px;background:#808080;"></div><div style="left:45px;top:150px;width:1px;height:1px;background:#808080;"></div><div style="left:47px;top:150px;width:1px;height:1px;background:#808080;"></div><svg class="ic" style="left:49px;top:140px" width="20" height="20" viewBox="0 0 20 20"><path d="M0.6 19.7 L12.4 19.7 L11.4 17.6 L1.8 17.6 Z" fill="#383838"/><rect x="2.2" y="0.8" width="9.2" height="17" fill="#ececec" stroke="#b4b4b4" stroke-width="0.6"/><rect x="9" y="1.2" width="2.2" height="16.4" fill="#c8c8c8"/><rect x="5.2" y="4" width="3.6" height="13.6" fill="#fcfcfc" stroke="#a8a8a8" stroke-width="0.5"/><rect x="8" y="5" width="1.2" height="12.6" fill="#808080" opacity="0.55"/><rect x="5.6" y="1.8" width="3.2" height="2.4" fill="#50c830"/><circle cx="14.2" cy="12.8" r="5.2" fill="#fcfcfc" stroke="#909090" stroke-width="1.2"/><text x="14.3" y="16.5" font-family="Liberation Sans" font-weight="bold" font-size="10" text-anchor="middle" fill="#2040b8">?</text></svg><div class="t" style="left:73.75px;top:140px;height:20px;line-height:20px;transform:scaleX(1.0475);">Другие устройства</div><div style="left:31px;top:165px;width:11px;height:11px;border:1px solid #808080;background:#fff;"></div><div style="left:33px;top:170px;width:7px;height:1px;background:#000;"></div><div style="left:43px;top:170px;width:1px;height:1px;background:#808080;"></div><div style="left:45px;top:170px;width:1px;height:1px;background:#808080;"></div><div style="left:47px;top:170px;width:1px;height:1px;background:#808080;"></div><svg class="ic" style="left:49px;top:160px" width="20" height="20" viewBox="0 0 20 20"><path d="M8 0.8 L14.4 2.6 Q19.6 5.4 19.6 9.5 Q19.6 13.6 14.4 16.4 L8 18.6 Z" fill="#a4b4c8" stroke="#8090a4" stroke-width="0.6"/><path d="M15.2 4.6 L17.4 5.6 L17.4 10.6 L15.2 11.4 Z" fill="#7888a0" opacity="0.75"/><ellipse cx="7.2" cy="9.7" rx="6.9" ry="9.3" fill="url(#gSpk)" stroke="#788494" stroke-width="0.9"/><ellipse cx="7.3" cy="9.7" rx="5.5" ry="7.8" fill="#bcc8d6" stroke="#f4f6f8" stroke-width="0.8" stroke-dasharray="1.6 0.7"/><ellipse cx="7.2" cy="9.7" rx="4.6" ry="6.7" fill="#c0ccd8" stroke="#9aa8b8" stroke-width="0.4"/><ellipse cx="9.8" cy="8.4" rx="1.9" ry="2.7" fill="#eef2f6" stroke="#98a8b8" stroke-width="0.5"/></svg><div class="t" style="left:74.20px;top:160px;height:20px;line-height:20px;transform:scaleX(1.0091);">Звуковые, видео и игровые устройства</div><div style="left:59px;top:180px;width:1px;height:10px;background:repeating-linear-gradient(to bottom,#808080 0,#808080 1px,transparent 1px,transparent 2px);"></div><div style="left:59px;top:190px;width:1px;height:1px;background:#808080;"></div><div style="left:61px;top:190px;width:1px;height:1px;background:#808080;"></div><div style="left:63px;top:190px;width:1px;height:1px;background:#808080;"></div><div style="left:65px;top:190px;width:1px;height:1px;background:#808080;"></div><div style="left:67px;top:190px;width:1px;height:1px;background:#808080;"></div><div style="left:69px;top:190px;width:1px;height:1px;background:#808080;"></div><div style="left:71px;top:190px;width:1px;height:1px;background:#808080;"></div><svg class="ic" style="left:72px;top:180px" width="20" height="20" viewBox="0 0 20 20"><path d="M8 0.8 L14.4 2.6 Q19.6 5.4 19.6 9.5 Q19.6 13.6 14.4 16.4 L8 18.6 Z" fill="#a4b4c8" stroke="#8090a4" stroke-width="0.6"/><path d="M15.2 4.6 L17.4 5.6 L17.4 10.6 L15.2 11.4 Z" fill="#7888a0" opacity="0.75"/><ellipse cx="7.2" cy="9.7" rx="6.9" ry="9.3" fill="url(#gSpk)" stroke="#788494" stroke-width="0.9"/><ellipse cx="7.3" cy="9.7" rx="5.5" ry="7.8" fill="#bcc8d6" stroke="#f4f6f8" stroke-width="0.8" stroke-dasharray="1.6 0.7"/><ellipse cx="7.2" cy="9.7" rx="4.6" ry="6.7" fill="#c0ccd8" stroke="#9aa8b8" stroke-width="0.4"/><ellipse cx="9.8" cy="8.4" rx="1.9" ry="2.7" fill="#eef2f6" stroke="#98a8b8" stroke-width="0.5"/></svg><div class="t" style="left:97.25px;top:180px;height:20px;line-height:20px;transform:scaleX(0.9533);">Realtek High Definition Audio</div><div style="left:31px;top:205px;width:11px;height:11px;border:1px solid #808080;background:#fff;"></div><div style="left:33px;top:210px;width:7px;height:1px;background:#000;"></div><div style="left:36px;top:207px;width:1px;height:7px;background:#000;"></div><div style="left:43px;top:210px;width:1px;height:1px;background:#808080;"></div><div style="left:45px;top:210px;width:1px;height:1px;background:#808080;"></div><div style="left:47px;top:210px;width:1px;height:1px;background:#808080;"></div><svg class="ic" style="left:49px;top:200px" width="20" height="20" viewBox="0 0 20 20"><path d="M2 5 L18.2 5 L19.8 9.6 L19.8 13.8 L0.4 13.8 L0.4 9.6 Z" fill="#98a8d0" stroke="#8090b8" stroke-width="0.6"/><path d="M2.8 6.2 L17.4 6.2 L18.8 10.6 L1.4 10.6 Z" fill="#fff"/><rect x="3.4" y="6.4" width="1" height="0.9" fill="#a8b4d0"/><rect x="5.4" y="6.4" width="1" height="0.9" fill="#a8b4d0"/><rect x="7.4" y="6.4" width="1" height="0.9" fill="#a8b4d0"/><rect x="9.4" y="6.4" width="1" height="0.9" fill="#a8b4d0"/><rect x="11.4" y="6.4" width="1" height="0.9" fill="#a8b4d0"/><rect x="13.4" y="6.4" width="1" height="0.9" fill="#a8b4d0"/><rect x="15.4" y="6.4" width="1" height="0.9" fill="#a8b4d0"/><rect x="4.0" y="7.8" width="1" height="0.9" fill="#a8b4d0"/><rect x="6.0" y="7.8" width="1" height="0.9" fill="#a8b4d0"/><rect x="8.0" y="7.8" width="1" height="0.9" fill="#a8b4d0"/><rect x="10.0" y="7.8" width="1" height="0.9" fill="#a8b4d0"/><rect x="12.0" y="7.8" width="1" height="0.9" fill="#a8b4d0"/><rect x="14.0" y="7.8" width="1" height="0.9" fill="#a8b4d0"/><rect x="16.0" y="7.8" width="1" height="0.9" fill="#a8b4d0"/><rect x="2.8" y="9.2" width="1" height="0.9" fill="#a8b4d0"/><rect x="4.8" y="9.2" width="1" height="0.9" fill="#a8b4d0"/><rect x="6.8" y="9.2" width="1" height="0.9" fill="#a8b4d0"/><rect x="8.8" y="9.2" width="1" height="0.9" fill="#a8b4d0"/><rect x="10.8" y="9.2" width="1" height="0.9" fill="#a8b4d0"/><rect x="12.8" y="9.2" width="1" height="0.9" fill="#a8b4d0"/><rect x="14.8" y="9.2" width="1" height="0.9" fill="#a8b4d0"/><path d="M0.6 11.8 L19.6 11.8 L19.4 14 Q10 15 0.8 14 Z" fill="#101820"/><rect x="0.4" y="10.6" width="19.4" height="1.2" fill="#f4f4f8"/></svg><div class="t" style="left:73.67px;top:200px;height:20px;line-height:20px;transform:scaleX(1.0263);">Клавиатуры</div><div style="left:31px;top:225px;width:11px;height:11px;border:1px solid #808080;background:#fff;"></div><div style="left:33px;top:230px;width:7px;height:1px;background:#000;"></div><div style="left:36px;top:227px;width:1px;height:7px;background:#000;"></div><div style="left:43px;top:230px;width:1px;height:1px;background:#808080;"></div><div style="left:45px;top:230px;width:1px;height:1px;background:#808080;"></div><div style="left:47px;top:230px;width:1px;height:1px;background:#808080;"></div><svg class="ic" style="left:49px;top:220px" width="20" height="20" viewBox="0 0 20 20"><path d="M2.4 5.4 L5 4.8 L5 14 L2.4 14.6 Z" fill="#d8d8d8" stroke="#a0a0a0" stroke-width="0.5"/><rect x="2.6" y="6" width="1.2" height="1.4" fill="#40d020"/><path d="M5.6 1.4 L17.8 2.6 L17.2 13.8 L5.6 12.6 Z" fill="#ece8dc" stroke="#b8b4a8" stroke-width="0.6"/><path d="M6.2 2.2 L17.2 3.3 L16.8 13.1 L6.2 12 Z" fill="url(#gScr)"/><path d="M6.2 2.2 L17.2 3.3 L16.8 13.1 L6.2 12 Z" fill="url(#gScrV)"/><path d="M9 13 L14.5 13.6 L16.6 16.6 Q12 18.6 7.2 16.6 Z" fill="#e4e4e0" stroke="#c0c0bc" stroke-width="0.5"/><path d="M2.4 14.6 L5 14 L8 14.4 L6 15.6 Z" fill="#b8b8b8"/></svg><div class="t" style="left:73.66px;top:220px;height:20px;line-height:20px;transform:scaleX(1.0352);">Компьютер</div><div style="left:31px;top:245px;width:11px;height:11px;border:1px solid #808080;background:#fff;"></div><div style="left:33px;top:250px;width:7px;height:1px;background:#000;"></div><div style="left:36px;top:247px;width:1px;height:7px;background:#000;"></div><div style="left:43px;top:250px;width:1px;height:1px;background:#808080;"></div><div style="left:45px;top:250px;width:1px;height:1px;background:#808080;"></div><div style="left:47px;top:250px;width:1px;height:1px;background:#808080;"></div><svg class="ic" style="left:49px;top:240px" width="20" height="20" viewBox="0 0 20 20"><rect x="6.2" y="0" width="7.8" height="6.2" fill="#c0c0c4" stroke="#88888c" stroke-width="0.6"/><rect x="7.6" y="1" width="5" height="4.6" fill="#ececf0"/><path d="M5 6 L15 6 L15 13 Q14.4 15.4 11.6 16.4 L8.4 16.4 Q5.6 15.4 5 13 Z" fill="url(#gUsb)" stroke="#38383c" stroke-width="0.5"/><rect x="5.6" y="7.2" width="8.8" height="1.2" fill="#98989c" opacity="0.7"/><rect x="9" y="16.2" width="2" height="3.8" fill="#38383c"/></svg><div class="t" style="left:73.70px;top:240px;height:20px;line-height:20px;transform:scaleX(0.9975);">Контроллеры USB</div><div style="left:31px;top:265px;width:11px;height:11px;border:1px solid #808080;background:#fff;"></div><div style="left:33px;top:270px;width:7px;height:1px;background:#000;"></div><div style="left:36px;top:267px;width:1px;height:7px;background:#000;"></div><div style="left:43px;top:270px;width:1px;height:1px;background:#808080;"></div><div style="left:45px;top:270px;width:1px;height:1px;background:#808080;"></div><div style="left:47px;top:270px;width:1px;height:1px;background:#808080;"></div><svg class="ic" style="left:49px;top:260px" width="20" height="20" viewBox="0 0 20 20"><g><path d="M5 8 L15 8 L19.0 9.6 L1.0 9.6 Z" fill="url(#gDrvTop)" stroke="#a4a4ac" stroke-width="0.6"/><rect x="0.4" y="9.6" width="19.200000000000003" height="10.000000000000002" rx="1.6" fill="url(#gDrv)" stroke="#6c6c7c" stroke-width="0.9"/><rect x="3.6" y="10.5" width="10.560000000000002" height="3.06" fill="#fff"/><rect x="3.6" y="13.56" width="10.560000000000002" height="3.67" fill="#d6d6ec"/><rect x="2.4" y="14.50" width="10.752000000000002" height="1" fill="#505058"/><rect x="1.2000000000000002" y="17.8" width="2" height="1.4" fill="#585864"/><rect x="16.8" y="17.8" width="2" height="1.4" fill="#585864"/></g><rect x="10.2" y="0.3" width="9.6" height="9.8" rx="0.5" fill="#545458" stroke="#3c3c40" stroke-width="0.5"/><rect x="11.2" y="1" width="7.6" height="5.4" fill="#f8f8f8"/><rect x="11.4" y="7.2" width="3" height="2.6" fill="#a8a8a8"/><rect x="15.2" y="7.2" width="3.2" height="2.6" fill="#909090"/><rect x="19.3" y="10.2" width="0.9" height="10.5" fill="#8c98a8"/><rect x="10" y="12.4" width="9.3" height="7" fill="url(#gPcb)" stroke="#186040" stroke-width="0.5"/><rect x="11.8" y="14.4" width="2.6" height="1.2" fill="#e8f4ec"/><rect x="11.8" y="16.6" width="2.6" height="1.2" fill="#e8f4ec"/><rect x="14.8" y="14.8" width="2.6" height="2" fill="#183828"/><rect x="16.4" y="14.0" width="1.4" height="1" fill="#c8e0d0"/><rect x="11.3" y="19.4" width="5.4" height="1.6" fill="#f4c000"/></svg><div class="t" style="left:73.67px;top:260px;height:20px;line-height:20px;transform:scaleX(1.0339);">Контроллеры гибких дисков</div><div style="left:31px;top:285px;width:11px;height:11px;border:1px solid #808080;background:#fff;"></div><div style="left:33px;top:290px;width:7px;height:1px;background:#000;"></div><div style="left:36px;top:287px;width:1px;height:7px;background:#000;"></div><div style="left:43px;top:290px;width:1px;height:1px;background:#808080;"></div><div style="left:45px;top:290px;width:1px;height:1px;background:#808080;"></div><div style="left:47px;top:290px;width:1px;height:1px;background:#808080;"></div><svg class="ic" style="left:49px;top:280px" width="20" height="20" viewBox="0 0 20 20"><path d="M13 3.6 L9.9 1.8 L5.4 5.6" stroke="#bcc4c8" stroke-width="2.6" fill="none" stroke-linejoin="miter"/><path d="M15.8 6.4 L12.6 3.4" stroke="#484848" stroke-width="2.4" fill="none"/><path d="M6 5 L2 10 L9.9 17.6 L15.4 12.8" stroke="#3c3c3c" stroke-width="2.6" fill="none" stroke-linejoin="miter"/><rect x="11" y="9.1" width="9" height="1.9" fill="#484848"/><rect x="12" y="11.6" width="4.4" height="1" fill="#a0a0a0"/></svg><div class="t" style="left:73.67px;top:280px;height:20px;line-height:20px;transform:scaleX(1.0292);">Контроллеры запоминающих устройств</div><div style="left:31px;top:305px;width:11px;height:11px;border:1px solid #808080;background:#fff;"></div><div style="left:33px;top:310px;width:7px;height:1px;background:#000;"></div><div style="left:43px;top:310px;width:1px;height:1px;background:#808080;"></div><div style="left:45px;top:310px;width:1px;height:1px;background:#808080;"></div><div style="left:47px;top:310px;width:1px;height:1px;background:#808080;"></div><svg class="ic" style="left:49px;top:300px" width="20" height="20" viewBox="0 0 20 20"><rect x="0.3" y="0.4" width="19.3" height="15.4" rx="0.8" fill="#e4e0d4" stroke="#a8a498" stroke-width="0.7"/><rect x="1.9000000000000001" y="1.9" width="16.1" height="11.2" fill="url(#gScr)"/><rect x="1.9000000000000001" y="1.9" width="16.1" height="11.2" fill="url(#gScrV)"/><rect x="8.15" y="15.8" width="3.6" height="1.6" fill="#b0b0ac"/><path d="M5.150000000000001 17.2 L14.750000000000002 17.2 L15.950000000000001 18.8 L3.950000000000001 18.8 Z" fill="#d0d0cc" stroke="#a4a4a0" stroke-width="0.4"/></svg><div class="t" style="left:73.67px;top:300px;height:20px;line-height:20px;transform:scaleX(1.0323);">Мониторы</div><div style="left:59px;top:320px;width:1px;height:10px;background:repeating-linear-gradient(to bottom,#808080 0,#808080 1px,transparent 1px,transparent 2px);"></div><div style="left:59px;top:330px;width:1px;height:1px;background:#808080;"></div><div style="left:61px;top:330px;width:1px;height:1px;background:#808080;"></div><div style="left:63px;top:330px;width:1px;height:1px;background:#808080;"></div><div style="left:65px;top:330px;width:1px;height:1px;background:#808080;"></div><div style="left:67px;top:330px;width:1px;height:1px;background:#808080;"></div><div style="left:69px;top:330px;width:1px;height:1px;background:#808080;"></div><div style="left:71px;top:330px;width:1px;height:1px;background:#808080;"></div><svg class="ic" style="left:72px;top:320px" width="20" height="20" viewBox="0 0 20 20"><rect x="0.3" y="0.4" width="19.3" height="15.4" rx="0.8" fill="#e4e0d4" stroke="#a8a498" stroke-width="0.7"/><rect x="1.9000000000000001" y="1.9" width="16.1" height="11.2" fill="url(#gScr)"/><rect x="1.9000000000000001" y="1.9" width="16.1" height="11.2" fill="url(#gScrV)"/><rect x="8.15" y="15.8" width="3.6" height="1.6" fill="#b0b0ac"/><path d="M5.150000000000001 17.2 L14.750000000000002 17.2 L15.950000000000001 18.8 L3.950000000000001 18.8 Z" fill="#d0d0cc" stroke="#a4a4a0" stroke-width="0.4"/></svg><div class="t" style="left:97.10px;top:320px;height:20px;line-height:20px;transform:scaleX(0.9974);">Универсальный монитор PnP</div><div style="left:31px;top:345px;width:11px;height:11px;border:1px solid #808080;background:#fff;"></div><div style="left:33px;top:350px;width:7px;height:1px;background:#000;"></div><div style="left:36px;top:347px;width:1px;height:7px;background:#000;"></div><div style="left:43px;top:350px;width:1px;height:1px;background:#808080;"></div><div style="left:45px;top:350px;width:1px;height:1px;background:#808080;"></div><div style="left:47px;top:350px;width:1px;height:1px;background:#808080;"></div><svg class="ic" style="left:49px;top:340px" width="20" height="20" viewBox="0 0 20 20"><path d="M0.4 15.6 Q0 13 2.4 11.4 L9.4 5.2 Q12.6 3.2 16.4 4.6 Q19.8 6 19 8 L13 15.4 Q9.6 19.8 5 19 Q1 18.2 0.4 15.6 Z" fill="url(#gMouse)" stroke="#b4b4b8" stroke-width="0.5"/><path d="M9.4 5.2 Q12.6 3.2 16.4 4.6 Q19.8 6 19 8 L15.4 12.4 Q15.6 8 9.4 5.2 Z" fill="#5068a8"/><path d="M10.4 5 Q12.6 3.8 14.6 4.4 L13 6.8 Z" fill="#c4cce0"/><path d="M12.2 4.2 L13.8 4.4 L12.8 6 L11.4 5.4 Z" fill="#3850a0"/><path d="M16.6 6.4 L18.4 7.6 L16.4 10.2 Z" fill="#90a0cc"/><path d="M2.6 13.4 Q6 10.4 10 12" stroke="#fff" stroke-width="1.8" fill="none" opacity="0.85"/></svg><div class="t" style="left:73.70px;top:340px;height:20px;line-height:20px;transform:scaleX(0.9988);">Мыши и иные указывающие устройства</div><div style="left:31px;top:365px;width:11px;height:11px;border:1px solid #808080;background:#fff;"></div><div style="left:33px;top:370px;width:7px;height:1px;background:#000;"></div><div style="left:36px;top:367px;width:1px;height:7px;background:#000;"></div><div style="left:43px;top:370px;width:1px;height:1px;background:#808080;"></div><div style="left:45px;top:370px;width:1px;height:1px;background:#808080;"></div><div style="left:47px;top:370px;width:1px;height:1px;background:#808080;"></div><svg class="ic" style="left:49px;top:360px" width="20" height="20" viewBox="0 0 20 20"><path d="M17.4 1 L18.6 1.4 L16.6 17.6 L15.8 17.4 Z" fill="#d8d8d8" stroke="#a8a8a8" stroke-width="0.4"/><path d="M1.4 2 L16 4.4 L15.4 18.6 L1 13.4 Z" fill="#e4d4a4" stroke="#80704c" stroke-width="0.6"/><path d="M1.8 2.8 L14 5 L13 17 L1.6 12.6 Z" fill="#181818"/><path d="M2.4 3.6 L13 5.6 L12.2 15.6 L2.2 11.8 Z" fill="#1848e8"/><path d="M6 4.4 L9 5 L11.4 14.8 L8.4 13.8 Z" fill="#6c98f8" opacity="0.75"/><circle cx="14.8" cy="6.4" r="0.8" fill="#282828"/><rect x="13.8" y="9" width="1.6" height="6" fill="#f4ecd0"/></svg><div class="t" style="left:73.69px;top:360px;height:20px;line-height:20px;transform:scaleX(1.0064);">Переносные устройства</div><div style="left:31px;top:385px;width:11px;height:11px;border:1px solid #808080;background:#fff;"></div><div style="left:33px;top:390px;width:7px;height:1px;background:#000;"></div><div style="left:36px;top:387px;width:1px;height:7px;background:#000;"></div><div style="left:43px;top:390px;width:1px;height:1px;background:#808080;"></div><div style="left:45px;top:390px;width:1px;height:1px;background:#808080;"></div><div style="left:47px;top:390px;width:1px;height:1px;background:#808080;"></div><svg class="ic" style="left:49px;top:380px" width="20" height="20" viewBox="0 0 20 20"><path d="M5.4 0 L14.8 0 L14.8 1.4 L5.4 1.4 Z" fill="#e8ecf0"/><rect x="1.4" y="4.6" width="2" height="6" fill="#a8bccc"/><rect x="16.6" y="4.6" width="2" height="6" fill="#a8bccc"/><path d="M4.2 3 L15.8 3 L15.4 8.6 Q14.6 11 12.6 11.4 L7.4 11.4 Q5.4 11 4.6 8.6 Z" fill="url(#gPort)" stroke="#98a8b8" stroke-width="0.4"/><path d="M0.3 1.6 L4 1 L16 1 L19.7 1.6 L19.7 3.4 L16 4 L4 4 L0.3 3.4 Z" fill="#787878" stroke="#585858" stroke-width="0.4"/><rect x="5" y="1.4" width="10" height="1" fill="#b0b0b0"/><rect x="6.2" y="11.2" width="7.6" height="4.4" fill="#b8c8d4" stroke="#8c9cac" stroke-width="0.4"/><rect x="6.6" y="12.4" width="6.8" height="0.9" fill="#e8eef2"/><rect x="6.6" y="14" width="6.8" height="0.9" fill="#e8eef2"/><rect x="7.4" y="15.6" width="4.8" height="4.4" fill="#c8d4dc"/><rect x="8.6" y="15.6" width="1.6" height="4.4" fill="#eef2f4"/></svg><div class="t" style="left:73.73px;top:380px;height:20px;line-height:20px;transform:scaleX(0.9724);">Порты (COM и LPT)</div><div style="left:31px;top:405px;width:11px;height:11px;border:1px solid #808080;background:#fff;"></div><div style="left:33px;top:410px;width:7px;height:1px;background:#000;"></div><div style="left:36px;top:407px;width:1px;height:7px;background:#000;"></div><div style="left:43px;top:410px;width:1px;height:1px;background:#808080;"></div><div style="left:45px;top:410px;width:1px;height:1px;background:#808080;"></div><div style="left:47px;top:410px;width:1px;height:1px;background:#808080;"></div><svg class="ic" style="left:49px;top:400px" width="20" height="20" viewBox="0 0 20 20"><rect x="19" y="2.2" width="1" height="1.4" fill="#e8a820"/><rect x="19" y="4.6" width="1" height="1.4" fill="#e8a820"/><rect x="19" y="7.0" width="1" height="1.4" fill="#e8a820"/><rect x="19" y="9.4" width="1" height="1.4" fill="#e8a820"/><rect x="19" y="11.8" width="1" height="1.4" fill="#e8a820"/><rect x="19" y="14.2" width="1" height="1.4" fill="#e8a820"/><rect x="1.4" y="19.2" width="1.4" height="0.9" fill="#e8a820"/><rect x="3.7" y="19.2" width="1.4" height="0.9" fill="#e8a820"/><rect x="6.0" y="19.2" width="1.4" height="0.9" fill="#e8a820"/><rect x="8.3" y="19.2" width="1.4" height="0.9" fill="#e8a820"/><rect x="10.6" y="19.2" width="1.4" height="0.9" fill="#e8a820"/><rect x="12.9" y="19.2" width="1.4" height="0.9" fill="#e8a820"/><rect x="15.2" y="19.2" width="1.4" height="0.9" fill="#e8a820"/><path d="M0.4 0.3 L15.6 0.3 L18.8 3 L18.8 19 L0.4 19 Z" fill="#545656" stroke="#3c3c3c" stroke-width="0.6"/><rect x="4" y="4" width="11" height="11" fill="url(#gCpu)" stroke="#e8e8e8" stroke-width="0.6"/><rect x="15" y="15.2" width="2" height="2" fill="#f0a020"/><path d="M4 15.6 L15 15.6 L15 17.6 L4 17.6 Z" fill="#2c2c2c"/></svg><div class="t" style="left:73.70px;top:400px;height:20px;line-height:20px;transform:scaleX(1.0000);">Процессоры</div><div style="left:31px;top:425px;width:11px;height:11px;border:1px solid #808080;background:#fff;"></div><div style="left:33px;top:430px;width:7px;height:1px;background:#000;"></div><div style="left:36px;top:427px;width:1px;height:7px;background:#000;"></div><div style="left:43px;top:430px;width:1px;height:1px;background:#808080;"></div><div style="left:45px;top:430px;width:1px;height:1px;background:#808080;"></div><div style="left:47px;top:430px;width:1px;height:1px;background:#808080;"></div><svg class="ic" style="left:49px;top:420px" width="20" height="20" viewBox="0 0 20 20"><rect x="6.2" y="0.2" width="12.8" height="10" rx="0.6" fill="#d0d0cc" stroke="#a8a8a4" stroke-width="0.5"/><rect x="9" y="1.6" width="7" height="6.4" fill="url(#gScr)"/><rect x="1.2" y="4.2" width="11.4" height="9.6" rx="0.6" fill="#ecece8" stroke="#a4a4a0" stroke-width="0.6"/><rect x="3.6" y="5.8" width="7" height="6" fill="url(#gScr)"/><rect x="0.2" y="16.2" width="19.4" height="3.4" fill="#e4e8e8" stroke="#c0c8c8" stroke-width="0.4"/><rect x="7.4" y="13.8" width="3.4" height="2.6" fill="#10c470"/><rect x="5.2" y="16" width="8.8" height="3.8" fill="#10c470"/></svg><div class="t" style="left:74.21px;top:420px;height:20px;line-height:20px;transform:scaleX(0.9837);">Сетевые адаптеры</div><div style="left:31px;top:445px;width:11px;height:11px;border:1px solid #808080;background:#fff;"></div><div style="left:33px;top:450px;width:7px;height:1px;background:#000;"></div><div style="left:36px;top:447px;width:1px;height:7px;background:#000;"></div><div style="left:43px;top:450px;width:1px;height:1px;background:#808080;"></div><div style="left:45px;top:450px;width:1px;height:1px;background:#808080;"></div><div style="left:47px;top:450px;width:1px;height:1px;background:#808080;"></div><svg class="ic" style="left:49px;top:440px" width="20" height="20" viewBox="0 0 20 20"><path d="M2.4 5.4 L5 4.8 L5 14 L2.4 14.6 Z" fill="#d8d8d8" stroke="#a0a0a0" stroke-width="0.5"/><rect x="2.6" y="6" width="1.2" height="1.4" fill="#40d020"/><path d="M5.6 1.4 L17.8 2.6 L17.2 13.8 L5.6 12.6 Z" fill="#ece8dc" stroke="#b8b4a8" stroke-width="0.6"/><path d="M6.2 2.2 L17.2 3.3 L16.8 13.1 L6.2 12 Z" fill="url(#gScr)"/><path d="M6.2 2.2 L17.2 3.3 L16.8 13.1 L6.2 12 Z" fill="url(#gScrV)"/><path d="M9 13 L14.5 13.6 L16.6 16.6 Q12 18.6 7.2 16.6 Z" fill="#e4e4e0" stroke="#c0c0bc" stroke-width="0.5"/><path d="M2.4 14.6 L5 14 L8 14.4 L6 15.6 Z" fill="#b8b8b8"/></svg><div class="t" style="left:74.19px;top:440px;height:20px;line-height:20px;transform:scaleX(1.0194);">Системные устройства</div><div style="left:31px;top:465px;width:11px;height:11px;border:1px solid #808080;background:#fff;"></div><div style="left:33px;top:470px;width:7px;height:1px;background:#000;"></div><div style="left:36px;top:467px;width:1px;height:7px;background:#000;"></div><div style="left:43px;top:470px;width:1px;height:1px;background:#808080;"></div><div style="left:45px;top:470px;width:1px;height:1px;background:#808080;"></div><div style="left:47px;top:470px;width:1px;height:1px;background:#808080;"></div><svg class="ic" style="left:49px;top:460px" width="20" height="20" viewBox="0 0 20 20"><g opacity="0.45"><path d="M5 0.2 L15 0.2 L19.0 1.4 L1.0 1.4 Z" fill="url(#gDrvTop)" stroke="#a4a4ac" stroke-width="0.6"/><rect x="0.4" y="1.4" width="19.200000000000003" height="7.999999999999999" rx="1.6" fill="url(#gDrv)" stroke="#6c6c7c" stroke-width="0.9"/><rect x="3.6" y="2.3" width="10.560000000000002" height="2.46" fill="#fff"/><rect x="3.6" y="4.76" width="10.560000000000002" height="2.95" fill="#d6d6ec"/><rect x="14.51" y="1.7999999999999998" width="1.2" height="7.199999999999999" fill="#d8d8d8" opacity="0.8"/><rect x="14.32" y="3.53" width="1.6" height="3.28" fill="#a0a0a0"/><rect x="1.2000000000000002" y="7.6" width="2" height="1.4" fill="#585864"/><rect x="16.8" y="7.6" width="2" height="1.4" fill="#585864"/></g><g><path d="M5 9.4 L15 9.4 L19.0 10.6 L1.0 10.6 Z" fill="url(#gDrvTop)" stroke="#a4a4ac" stroke-width="0.6"/><rect x="0.4" y="10.6" width="19.200000000000003" height="9.200000000000001" rx="1.6" fill="url(#gDrv)" stroke="#6c6c7c" stroke-width="0.9"/><rect x="3.6" y="11.5" width="10.560000000000002" height="2.82" fill="#fff"/><rect x="3.6" y="14.32" width="10.560000000000002" height="3.38" fill="#d6d6ec"/><rect x="14.51" y="11.0" width="1.2" height="8.4" fill="#b8e8a8" opacity="0.8"/><rect x="14.32" y="13.04" width="1.6" height="3.76" fill="#28c828"/><rect x="1.2000000000000002" y="18" width="2" height="1.4" fill="#585864"/><rect x="16.8" y="18" width="2" height="1.4" fill="#585864"/></g></svg><div class="t" style="left:73.75px;top:460px;height:20px;line-height:20px;transform:scaleX(1.0148);">Теневое копирование томов запоминающих устройств</div><div style="left:31px;top:485px;width:11px;height:11px;border:1px solid #808080;background:#fff;"></div><div style="left:33px;top:490px;width:7px;height:1px;background:#000;"></div><div style="left:36px;top:487px;width:1px;height:7px;background:#000;"></div><div style="left:43px;top:490px;width:1px;height:1px;background:#808080;"></div><div style="left:45px;top:490px;width:1px;height:1px;background:#808080;"></div><div style="left:47px;top:490px;width:1px;height:1px;background:#808080;"></div><svg class="ic" style="left:49px;top:480px" width="20" height="20" viewBox="0 0 20 20"><g><path d="M5 9 L15 9 L19.0 11.5 L1.0 11.5 Z" fill="url(#gDrvTop)" stroke="#a4a4ac" stroke-width="0.6"/><rect x="0.4" y="11.5" width="19.200000000000003" height="8.3" rx="1.6" fill="url(#gDrv)" stroke="#6c6c7c" stroke-width="0.9"/><rect x="3.6" y="12.4" width="10.560000000000002" height="2.55" fill="#fff"/><rect x="3.6" y="14.95" width="10.560000000000002" height="3.06" fill="#d6d6ec"/><rect x="14.51" y="11.9" width="1.2" height="7.5" fill="#b8e8a8" opacity="0.8"/><rect x="14.32" y="13.71" width="1.6" height="3.40" fill="#28c828"/><rect x="1.2000000000000002" y="18" width="2" height="1.4" fill="#585864"/><rect x="16.8" y="18" width="2" height="1.4" fill="#585864"/></g></svg><div class="t" style="left:73.75px;top:480px;height:20px;line-height:20px;transform:scaleX(1.0208);">Тома запоминающих устройств</div><div style="left:31px;top:505px;width:11px;height:11px;border:1px solid #808080;background:#fff;"></div><div style="left:33px;top:510px;width:7px;height:1px;background:#000;"></div><div style="left:36px;top:507px;width:1px;height:7px;background:#000;"></div><div style="left:43px;top:510px;width:1px;height:1px;background:#808080;"></div><div style="left:45px;top:510px;width:1px;height:1px;background:#808080;"></div><div style="left:47px;top:510px;width:1px;height:1px;background:#808080;"></div><svg class="ic" style="left:49px;top:500px" width="20" height="20" viewBox="0 0 20 20"><rect x="0.4" y="0.3" width="6.4" height="15" rx="2" fill="#84848c" stroke="#6c6c74" stroke-width="0.5"/><rect x="2" y="1" width="3.6" height="2" fill="#38383c"/><rect x="1.8" y="3.6" width="4" height="7" fill="#f0f0f4"/><path d="M7.4 4 L19.8 4 L19.8 9.4 L7.4 9.4 Z" fill="#98a8c8" stroke="#7c8cb0" stroke-width="0.4"/><rect x="8.6" y="4.9" width="1.6" height="0.9" fill="#fff"/><rect x="8.2" y="7" width="1.6" height="1.6" fill="#f0f0f8"/><rect x="11.4" y="4.9" width="1.6" height="0.9" fill="#fff"/><rect x="11.0" y="7" width="1.6" height="1.6" fill="#f0f0f8"/><rect x="14.2" y="4.9" width="1.6" height="0.9" fill="#fff"/><rect x="13.8" y="7" width="1.6" height="1.6" fill="#f0f0f8"/><rect x="17.0" y="4.9" width="1.6" height="0.9" fill="#fff"/><rect x="16.6" y="7" width="1.6" height="1.6" fill="#f0f0f8"/><rect x="8.8" y="10.4" width="9" height="6" fill="#d4dce4" stroke="#a4b0bc" stroke-width="0.4"/><rect x="11" y="11" width="5.4" height="3" fill="#38a8e0"/><rect x="9.6" y="11.4" width="1.2" height="2.4" fill="#70e870"/><rect x="9.4" y="14" width="1.4" height="1.2" fill="#e87828"/><rect x="11.6" y="14.6" width="4" height="1.2" fill="#787878"/><rect x="16.6" y="11" width="3.2" height="8.6" rx="1" fill="#8c8c94" stroke="#707078" stroke-width="0.4"/><rect x="7.6" y="15.6" width="3.4" height="3.4" fill="#b0bcc8"/><rect x="9.2" y="17.4" width="2" height="2" fill="#585860"/></svg><div class="t" style="left:74.20px;top:500px;height:20px;line-height:20px;transform:scaleX(0.9956);">Устройства HID (Human Interface Devices)</div><div style="left:31px;top:525px;width:11px;height:11px;border:1px solid #808080;background:#fff;"></div><div style="left:33px;top:530px;width:7px;height:1px;background:#000;"></div><div style="left:36px;top:527px;width:1px;height:7px;background:#000;"></div><div style="left:43px;top:530px;width:1px;height:1px;background:#808080;"></div><div style="left:45px;top:530px;width:1px;height:1px;background:#808080;"></div><div style="left:47px;top:530px;width:1px;height:1px;background:#808080;"></div><svg class="ic" style="left:49px;top:520px" width="20" height="20" viewBox="0 0 20 20"><rect x="6.2" y="0.2" width="8" height="5" fill="#c8c8cc" stroke="#8c8c90" stroke-width="0.6"/><rect x="7.6" y="0.8" width="1.8" height="3.8" fill="#f4f4f4"/><rect x="11.4" y="0.8" width="1.8" height="3.8" fill="#f4f4f4"/><rect x="9.8" y="1.2" width="1.2" height="2.6" fill="#606064"/><path d="M5.2 5 L15 5 L15 11.6 L14 13 L6.2 13 L5.2 11.6 Z" fill="#4c4c50" stroke="#303034" stroke-width="0.5"/><rect x="6.4" y="6" width="7.4" height="4" fill="#74747a"/><rect x="9.6" y="6" width="1" height="4" fill="#a8a8ac"/><rect x="5.4" y="10.8" width="9.4" height="0.9" fill="#202024"/><rect x="7" y="13" width="6.4" height="2.4" fill="#3c3c40"/><rect x="8" y="13.6" width="2" height="1" fill="#98989c"/><rect x="7.8" y="15.4" width="4.6" height="4.6" fill="#181818"/><rect x="8" y="16" width="1.4" height="1.4" fill="#e8e8e8"/><rect x="10.8" y="16" width="1.4" height="1.4" fill="#e8e8e8"/><rect x="8" y="18.6" width="1.4" height="1.4" fill="#e8e8e8"/><rect x="10.8" y="18.6" width="1.4" height="1.4" fill="#e8e8e8"/></svg><div class="t" style="left:74.20px;top:520px;height:20px;line-height:20px;transform:scaleX(0.9996);">Хост-контроллеры шины IEEE 1394</div></div></div></div>
<div style="left:802px;top:82px;width:190px;height:602px;border-top:1px solid #808080;border-left:1px solid #808080;border-right:1px solid #fff;border-bottom:1px solid #fff;"><div style="left:0;top:0;width:188px;height:600px;border-top:1px solid #404040;border-left:1px solid #404040;border-right:1px solid #d4d0c8;border-bottom:1px solid #d4d0c8;"><div class="pane" style="left:0;top:0;width:186px;height:598px;"><div style="left:0;top:0;width:186px;height:22px;background:#d4d0c8;border-top:1px solid #fff;border-left:1px solid #e8e6e0;"></div><div style="left:0;top:22px;width:186px;height:1px;background:#808080;"></div><div style="left:0;top:23px;width:186px;height:1px;background:#fff;"></div><div style="left:0;top:24px;width:186px;height:30px;background:linear-gradient(to bottom,#a6caf0 0%,#122c74 100%);"></div><div style="left:0;top:54px;width:186px;height:1px;background:#04186a;"></div><div style="left:0;top:24px;width:1px;height:30px;background:rgba(255,255,255,0.12);"></div><div class="t" style="left:4.70px;top:1px;height:20px;line-height:20px;transform:scaleX(1.0409);font-weight:bold;">Действия</div><div class="t" style="left:8.00px;top:29px;height:20px;line-height:20px;transform:scaleX(1.0347);font-weight:bold;color:#fff;">Диспетчер устройс...</div><svg style="left:166px;top:36px" width="12" height="7" viewBox="0 0 12 7"><path d="M0 7 L6 0.5 L12 7 Z" fill="#fff"/></svg><div class="t" style="left:38.20px;top:59px;height:20px;line-height:20px;transform:scaleX(1.0389);">Дополнительны...</div><svg style="left:170px;top:65px" width="6" height="11" viewBox="0 0 6 11"><path d="M0 0 L6 5.5 L0 11 Z" fill="#000"/></svg></div></div></div>
<div style="left:0px;top:686px;width:616px;height:22px;border-top:1px solid #808080;border-left:1px solid #808080;border-right:1px solid #fff;border-bottom:1px solid #fff;"></div>
<div style="left:618px;top:686px;width:227px;height:22px;border-top:1px solid #808080;border-left:1px solid #808080;border-right:1px solid #fff;border-bottom:1px solid #fff;"></div>
<div style="left:847px;top:686px;width:143px;height:22px;border-top:1px solid #808080;border-left:1px solid #808080;border-right:1px solid #fff;border-bottom:1px solid #fff;"></div>

</body></html>
